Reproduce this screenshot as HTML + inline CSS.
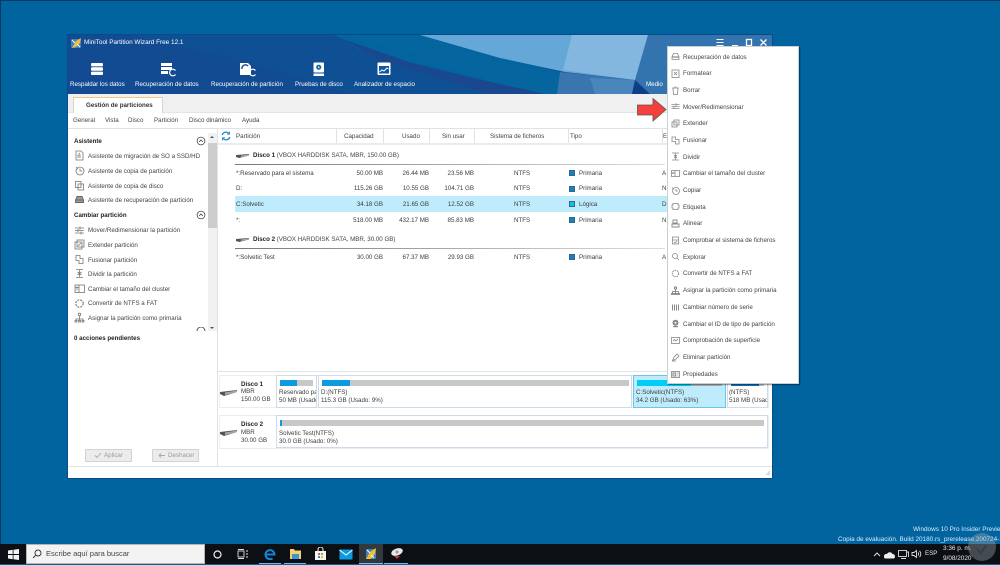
<!DOCTYPE html>
<html lang="es"><head><meta charset="utf-8"><title>MiniTool Partition Wizard</title>
<style>
html,body{margin:0;padding:0}
html{background:#02649f}
body{width:1000px;height:564px;overflow:hidden;position:relative;background:#02649f;font-family:"Liberation Sans",sans-serif;font-size:6.2px;color:#3c3c3c;filter:blur(.3px)}
div,span,svg{position:absolute;white-space:nowrap}
.t{line-height:12px;height:12px}
.h{color:#fff;font-size:6.2px;line-height:12px;top:79px}
.m{top:115px;color:#444}
.s{left:88px;color:#444}
.b{left:74px;font-weight:bold;color:#222}
.i{left:74px;width:11px;height:11px}
.c{top:131px;color:#444}
.sep{top:129px;width:1px;height:14px;background:#dde3e6}
.r{text-align:right}
.sq{width:6px;height:6px;background:#0f82c4;border:1px solid #37658a;box-sizing:border-box;left:569px}
.mi{left:683px;color:#444}
.mic{left:671px;width:9px;height:9px}
.bar{background:#c8c8c8;height:6px}
.fill{background:#0c9be0;height:6px;left:0;top:0}
</style></head><body>
<div style="left:0;top:0;width:1000px;height:1px;background:#0b3a5c"></div>
<div style="left:0;top:0;width:1px;height:544px;background:#0b3a5c"></div>

<!-- window -->
<div style="left:68px;top:35px;width:704px;height:443px;background:#fff;box-shadow:0 0 0 1px #0a4a8a"></div>
<svg style="left:68px;top:35px" width="704" height="59" viewBox="68 35 704 59">
<rect x="68" y="35" width="704" height="59" fill="#124b92"/>
<polygon points="130,35 420,35 560,94 350,94 240,60" fill="#0f4f94"/>
<polygon points="335,35 420,35 560,72 635,80 650,94 540,94 360,50" fill="#03649f"/>
<polygon points="345,35 420,35 500,62 565,75 560,94 520,94 420,55" fill="#04659f"/>
<polygon points="340,38 420,66 545,94 490,94 380,60" fill="#19488f"/>
<polygon points="420,35 648,35 635,80 565,72 500,58" fill="#65a8d8"/>
<polygon points="572,35 648,35 635,80 563,70" fill="#84b7e0"/>
<polygon points="560,72 635,80 632,94 557,94" fill="#3a75b0"/>
<polygon points="590,78 635,80 632,94 595,94" fill="#4a86bb"/>
<polygon points="635,80 650,82 668,94 632,94" fill="#0c3f86"/>
<polygon points="648,35 772,35 772,94 650,94 635,80" fill="#3474ae"/>
</svg>

<!-- logo -->
<svg style="left:71px;top:37px" width="11" height="12" viewBox="0 0 11 12"><rect x="0" y="2" width="10" height="9" rx="1" fill="#3b82c4"/><path d="M1 11 L5 4 L10 1 L9 6 L5 10Z" fill="#f0c030"/><path d="M1 3l3 3M6 7l3 3" stroke="#fff" stroke-width="1"/></svg>
<div class="t" style="left:84px;top:37px;color:#fff;font-size:6.4px">MiniTool Partition Wizard Free 12.1</div>

<!-- toolbar icons -->
<svg style="left:91px;top:62px" width="13" height="14" viewBox="0 0 13 14" fill="#fff"><rect x="0" y="1" width="12" height="3.4" rx="1"/><rect x="0" y="5.3" width="12" height="3.4" rx="1"/><rect x="0" y="9.6" width="12" height="3.4" rx="1"/></svg>
<svg style="left:161px;top:62px" width="16" height="15" viewBox="0 0 16 15" fill="#fff"><rect x="0" y="1" width="11" height="3"/><rect x="0" y="5" width="11" height="3"/><rect x="0" y="9" width="7" height="3"/><path d="M14.5 8.5A3.3 3.3 0 1 0 14.5 12.5" fill="none" stroke="#fff" stroke-width="1.2"/></svg>
<svg style="left:240px;top:62px" width="17" height="15" viewBox="0 0 17 15"><path d="M0 1h8l3 3v9H0z" fill="#fff"/><path d="M2 7a3.5 3.5 0 0 1 6-3" fill="none" stroke="#124b92" stroke-width="1.4"/><path d="M15.5 8.5A3.3 3.3 0 1 0 15.5 12.5" fill="none" stroke="#fff" stroke-width="1.2"/></svg>
<svg style="left:313px;top:62px" width="12" height="15" viewBox="0 0 12 15"><rect x="0.5" y="0.5" width="10.5" height="10" rx="1" fill="#fff"/><circle cx="5.7" cy="5.2" r="2.6" fill="#0f6aa8"/><circle cx="5.7" cy="5.2" r=".8" fill="#fff"/><rect x="0.5" y="11.5" width="10.5" height="2.5" fill="#fff"/></svg>
<svg style="left:377px;top:62px" width="14" height="14" viewBox="0 0 14 14"><rect x=".5" y=".5" width="13" height="12.5" rx="1" fill="#fff"/><rect x="2" y="4" width="10" height="7.5" fill="#0c5a9c"/><path d="M2.5 10l2.5-2 2 1 3-3 1.5 1" fill="none" stroke="#fff" stroke-width="1"/></svg>

<div class="h" style="left:70px">Respaldar los datos</div>
<div class="h" style="left:135px">Recuperación de datos</div>
<div class="h" style="left:211px">Recuperación de partición</div>
<div class="h" style="left:295px">Pruebas de disco</div>
<div class="h" style="left:354px">Analizador de espacio</div>
<div class="h" style="left:646px">Medio</div>

<!-- window controls -->
<svg style="left:715px;top:38px" width="55" height="10" viewBox="0 0 55 10" fill="none" stroke="#fff" stroke-width="1"><path d="M1.5 1.5h7M1.5 4.5h7M1.5 7.500h7"/><path d="M17 7.500h6"/><rect x="31.500" y="1.500" width="5" height="6" stroke-width="1.300"/><path d="M45.500 1.500l6 6M51.500 1.500l-6 6" stroke-width="1.300"/></svg>

<!-- tab bar -->
<div style="left:68px;top:94px;width:704px;height:18px;background:#f0f0f0"></div>
<div style="left:68px;top:112px;width:704px;height:1px;background:#dbe8e6"></div>
<div style="left:73px;top:97px;width:90px;height:16px;background:#fff;border-top:1px solid #f0c98a;border-right:1px solid #d5d5d5;border-left:1px solid #d5d5d5;box-sizing:border-box"></div>
<div class="t" style="left:86px;top:100px;font-weight:bold;color:#333">Gestión de particiones</div>

<!-- menu -->
<div class="t m" style="left:73px">General</div>
<div class="t m" style="left:105px">Vista</div>
<div class="t m" style="left:128px">Disco</div>
<div class="t m" style="left:154px">Partición</div>
<div class="t m" style="left:189px">Disco dinámico</div>
<div class="t m" style="left:242px">Ayuda</div>
<div style="left:68px;top:128px;width:704px;height:1px;background:#dfe3e3"></div>

<!-- left panel -->
<div style="left:217px;top:128px;width:1px;height:338px;background:#dfe5e5"></div>
<div style="left:208px;top:133px;width:9px;height:198px;background:#f1f1f1"></div>
<div style="left:208px;top:143px;width:9px;height:85px;background:#cdcdcd"></div>
<div style="left:210px;top:136px;width:0;height:0;border:2px solid transparent;border-bottom-color:#555;border-top:0"></div>
<div style="left:210px;top:327px;width:0;height:0;border:2px solid transparent;border-top-color:#555;border-bottom:0"></div>

<div class="t b" style="top:136px">Asistente</div>
<div class="t b" style="top:210px">Cambiar partición</div>
<svg style="left:196px;top:136px" width="10" height="10" viewBox="0 0 10 10" fill="none" stroke="#444" stroke-width=".8"><circle cx="5" cy="5" r="3.900"/><path d="M3.200 5.800L5 4l1.800 1.800"/></svg>
<svg style="left:196px;top:210px" width="10" height="10" viewBox="0 0 10 10" fill="none" stroke="#444" stroke-width=".8"><circle cx="5" cy="5" r="3.900"/><path d="M3.200 5.800L5 4l1.800 1.800"/></svg>

<div class="t s" style="top:151px">Asistente de migración de SO a SSD/HD</div>
<div class="t s" style="top:166px">Asistente de copia de partición</div>
<div class="t s" style="top:181px">Asistente de copia de disco</div>
<div class="t s" style="top:195px">Asistente de recuperación de partición</div>
<div class="t s" style="top:225px">Mover/Redimensionar la partición</div>
<div class="t s" style="top:240px">Extender partición</div>
<div class="t s" style="top:255px">Fusionar partición</div>
<div class="t s" style="top:269px">Dividir la partición</div>
<div class="t s" style="top:284px">Cambiar el tamaño del cluster</div>
<div class="t s" style="top:298px">Convertir de NTFS a FAT</div>
<div class="t s" style="top:313px">Asignar la partición como primaria</div>

<svg class="i" style="top:150px" viewBox="0 0 11 11" fill="none" stroke="#777" stroke-width=".8"><path d="M2 1h5l2 2v7H2z"/><path d="M4 8V5h2v3M5 3l1 1"/></svg>
<svg class="i" style="top:165px" viewBox="0 0 11 11" fill="none" stroke="#777" stroke-width=".8"><circle cx="6" cy="6" r="4"/><path d="M6 3.500V6h2.500M2 2l2 2"/></svg>
<svg class="i" style="top:180px" viewBox="0 0 11 11" fill="none" stroke="#777" stroke-width=".8"><rect x="1.500" y="1.500" width="5.500" height="6"/><rect x="4" y="4" width="5.500" height="6"/></svg>
<svg class="i" style="top:194px" viewBox="0 0 11 11" fill="none" stroke="#666" stroke-width=".9"><path d="M1.500 6L3 2.500h5L9.500 6v2.500h-8z" fill="#999"/><path d="M1.500 6h8"/></svg>
<svg class="i" style="top:225px" viewBox="0 0 11 11" fill="none" stroke="#777" stroke-width=".8"><path d="M1 3h9M1 5.500h9M1 8h9M6 1.500v3M4 4v3M7 6.500v3"/></svg>
<svg class="i" style="top:239px" viewBox="0 0 11 11" fill="none" stroke="#777" stroke-width=".8"><rect x="1" y="3" width="7" height="7"/><rect x="3" y="1" width="7" height="7"/><path d="M4 7l3-3"/></svg>
<svg class="i" style="top:254px" viewBox="0 0 11 11" fill="none" stroke="#777" stroke-width=".8"><path d="M2 1.500h4v3h3v5H5V6.500H2z"/></svg>
<svg class="i" style="top:268px" viewBox="0 0 11 11" fill="none" stroke="#777" stroke-width=".8"><path d="M2 1.500h7M2 9.500h7M5.500 2v7M3.500 4l2 1.500 2-1.500M3.500 7l2-1.500 2 1.500"/></svg>
<svg class="i" style="top:283px" viewBox="0 0 11 11" fill="none" stroke="#777" stroke-width=".8"><rect x="1" y="2" width="9.500" height="7.500"/><path d="M1 4.500h4M3 3.500v4M5 2v7.500"/></svg>
<svg class="i" style="top:298px" viewBox="0 0 11 11" fill="none" stroke="#666" stroke-width="1" stroke-dasharray="2 1"><circle cx="5.500" cy="5.500" r="3.700"/></svg>
<svg class="i" style="top:312px" viewBox="0 0 11 11" fill="none" stroke="#777" stroke-width=".8"><circle cx="5.500" cy="2.500" r="1.300"/><path d="M5.500 4v2M2 9V7h7v2M5.500 6v3"/><rect x="1" y="8.500" width="2" height="1.500"/><rect x="4.500" y="8.500" width="2" height="1.500"/><rect x="8" y="8.500" width="2" height="1.500"/></svg>

<div style="left:74px;top:329px;width:130px;height:2px;overflow:hidden"><div class="t b" style="left:0;top:-7px">Partición de disco</div></div>
<svg style="left:196px;top:327px" width="10" height="4" viewBox="0 0 10 4" fill="none" stroke="#444" stroke-width=".8"><path d="M1 4a4 4 0 0 1 8 0"/></svg>
<div class="t b" style="top:333px">0 acciones pendientes</div>

<div style="left:85px;top:449px;width:47px;height:13px;background:#ececec;border:1px solid #d2d2d2;box-sizing:border-box;border-radius:1px"></div>
<div class="t" style="left:104px;top:450px;color:#999">Aplicar</div>
<svg style="left:94px;top:452px" width="8" height="7" viewBox="0 0 8 7" fill="none" stroke="#aaa" stroke-width=".9"><path d="M1 3.500l2 2 4-4.500"/></svg>
<div style="left:152px;top:449px;width:47px;height:13px;background:#ececec;border:1px solid #d2d2d2;box-sizing:border-box;border-radius:1px"></div>
<div class="t" style="left:168px;top:450px;color:#999">Deshacer</div>
<svg style="left:158px;top:452px" width="8" height="7" viewBox="0 0 8 7" fill="none" stroke="#aaa" stroke-width=".9"><path d="M1 3.500h6M3 1.500l-2 2 2 2"/></svg>

<div style="left:68px;top:466px;width:704px;height:1px;background:#dfe5e5"></div>
<svg style="left:765px;top:470px" width="6" height="6" viewBox="0 0 6 6" stroke="#bbb" stroke-width=".8"><path d="M5 1L1 5M5 3L3 5"/></svg>

<!-- table -->
<svg style="left:221px;top:131px" width="10" height="10" viewBox="0 0 10 10" fill="none" stroke="#1b87d6" stroke-width="1.300"><path d="M1.200 4A4 4 0 0 1 8 2.500M8.800 6A4 4 0 0 1 2 7.500"/><path d="M8.500 .6v2.600H6M1.500 9.400V6.800H4" stroke-width=".9"/></svg>
<div class="t c" style="left:236px">Partición</div>
<div class="t c" style="left:344px">Capacidad</div>
<div class="t c" style="left:402px">Usado</div>
<div class="t c" style="left:442px">Sin usar</div>
<div class="t c" style="left:490px">Sistema de ficheros</div>
<div class="t c" style="left:570px">Tipo</div>
<div class="t c" style="left:663px">E</div>
<div class="sep" style="left:336px"></div><div class="sep" style="left:383px"></div><div class="sep" style="left:429px"></div><div class="sep" style="left:474px"></div><div class="sep" style="left:568px"></div><div class="sep" style="left:662px"></div>
<div style="left:218px;top:143px;width:554px;height:2px;background:#e7ecee"></div>

<svg style="left:236px;top:153px" width="14" height="6" viewBox="0 0 14 6"><path d="M0 2l13-1v1.500L3 5 0 4z" fill="#555"/><path d="M5 2.500L13 1.500v1L5 4z" fill="#aaa"/></svg>
<div class="t" style="left:253px;top:150px;color:#444"><b style="color:#222">Disco 1</b> (VBOX HARDDISK SATA, MBR, 150.00 GB)</div>
<div style="left:235px;top:164px;width:430px;height:1px;background:linear-gradient(90deg,#777,#ddd)"></div>

<svg style="left:236px;top:237px" width="14" height="6" viewBox="0 0 14 6"><path d="M0 2l13-1v1.500L3 5 0 4z" fill="#555"/><path d="M5 2.500L13 1.500v1L5 4z" fill="#aaa"/></svg>
<div class="t" style="left:253px;top:234px;color:#444"><b style="color:#222">Disco 2</b> (VBOX HARDDISK SATA, MBR, 30.00 GB)</div>
<div style="left:235px;top:248px;width:430px;height:1px;background:linear-gradient(90deg,#777,#ddd)"></div>

<div style="left:235px;top:196px;width:432px;height:16px;background:#bfecfd"></div>

<div class="t" style="left:236px;top:168px">*:Reservado para el sistema</div>
<div class="t r" style="left:340px;top:168px;width:43px">50.00 MB</div>
<div class="t r" style="left:386px;top:168px;width:43px">26.44 MB</div>
<div class="t r" style="left:431px;top:168px;width:43px">23.56 MB</div>
<div class="t" style="left:514px;top:168px">NTFS</div>
<div class="sq" style="top:170px"></div><div class="t" style="left:579px;top:168px">Primaria</div>
<div class="t" style="left:662px;top:168px">A</div>

<div class="t" style="left:236px;top:183px">D:</div>
<div class="t r" style="left:340px;top:183px;width:43px">115.26 GB</div>
<div class="t r" style="left:386px;top:183px;width:43px">10.55 GB</div>
<div class="t r" style="left:431px;top:183px;width:43px">104.71 GB</div>
<div class="t" style="left:514px;top:183px">NTFS</div>
<div class="sq" style="top:186px"></div><div class="t" style="left:579px;top:183px">Primaria</div>
<div class="t" style="left:662px;top:183px">N</div>

<div class="t" style="left:236px;top:199px">C:Solvetic</div>
<div class="t r" style="left:340px;top:199px;width:43px">34.18 GB</div>
<div class="t r" style="left:386px;top:199px;width:43px">21.65 GB</div>
<div class="t r" style="left:431px;top:199px;width:43px">12.52 GB</div>
<div class="t" style="left:514px;top:199px">NTFS</div>
<div class="sq" style="top:201px;background:#14bdf0"></div><div class="t" style="left:579px;top:199px">Lógica</div>
<div class="t" style="left:662px;top:199px">D</div>

<div class="t" style="left:236px;top:215px">*:</div>
<div class="t r" style="left:340px;top:215px;width:43px">518.00 MB</div>
<div class="t r" style="left:386px;top:215px;width:43px">432.17 MB</div>
<div class="t r" style="left:431px;top:215px;width:43px">85.83 MB</div>
<div class="t" style="left:514px;top:215px">NTFS</div>
<div class="sq" style="top:217px"></div><div class="t" style="left:579px;top:215px">Primaria</div>
<div class="t" style="left:662px;top:215px">N</div>

<div class="t" style="left:236px;top:252px">*:Solvetic Test</div>
<div class="t r" style="left:340px;top:252px;width:43px">30.00 GB</div>
<div class="t r" style="left:386px;top:252px;width:43px">67.37 MB</div>
<div class="t r" style="left:431px;top:252px;width:43px">29.93 GB</div>
<div class="t" style="left:514px;top:252px">NTFS</div>
<div class="sq" style="top:254px"></div><div class="t" style="left:579px;top:252px">Primaria</div>
<div class="t" style="left:662px;top:252px">A</div>

<!-- disk map -->
<div style="left:218px;top:371px;width:554px;height:1px;background:#dfe5e5"></div>
<div style="left:219px;top:375px;width:550px;height:33px;background:#fff;border:1px solid #eaeef2;box-sizing:border-box"></div>
<div style="left:219px;top:415px;width:550px;height:34px;background:#fff;border:1px solid #eaeef2;box-sizing:border-box"></div>

<svg style="left:220px;top:389px" width="18" height="9" viewBox="0 0 18 9"><path d="M0 3l17-2v2L4 7 0 5z" fill="#555"/><path d="M5 3.500l12-2v1.500L5 6z" fill="#aaa"/></svg>
<svg style="left:220px;top:429px" width="18" height="9" viewBox="0 0 18 9"><path d="M0 3l17-2v2L4 7 0 5z" fill="#555"/><path d="M5 3.500l12-2v1.500L5 6z" fill="#aaa"/></svg>
<div class="t" style="left:241px;top:379px;font-weight:bold;color:#222">Disco 1</div>
<div class="t" style="left:241px;top:386px">MBR</div>
<div class="t" style="left:241px;top:394px">150.00 GB</div>
<div class="t" style="left:241px;top:419px;font-weight:bold;color:#222">Disco 2</div>
<div class="t" style="left:241px;top:427px">MBR</div>
<div class="t" style="left:241px;top:435px">30.00 GB</div>

<div style="left:276px;top:375px;width:41px;height:33px;background:#fff;border:1px solid #cfdbe6;box-sizing:border-box"></div>
<div class="bar" style="left:280px;top:380px;width:33px"><div class="fill" style="width:17px"></div></div>
<div style="left:279px;top:387px;width:37px;height:20px;overflow:hidden"><div class="t" style="left:0;top:0">Reservado para</div><div class="t" style="left:0;top:8px">50 MB (Usado: 52%)</div></div>

<div style="left:318px;top:375px;width:314px;height:33px;background:#fff;border:1px solid #cfdbe6;box-sizing:border-box"></div>
<div class="bar" style="left:322px;top:380px;width:307px"><div class="fill" style="width:28px"></div></div>
<div class="t" style="left:321px;top:387px">D:(NTFS)</div>
<div class="t" style="left:321px;top:395px">115.3 GB (Usado: 9%)</div>

<div style="left:633px;top:375px;width:93px;height:33px;background:#bfecfd;border:1px solid #6fc3e8;box-sizing:border-box"></div>
<div class="bar" style="left:637px;top:380px;width:85px;background:#a9b7bd"><div class="fill" style="width:54px;background:#00cdf5"></div></div>
<div class="t" style="left:636px;top:387px">C:Solvetic(NTFS)</div>
<div class="t" style="left:636px;top:395px">34.2 GB (Usado: 63%)</div>

<div style="left:727px;top:375px;width:41px;height:33px;background:#fff;border:1px solid #cfdbe6;box-sizing:border-box"></div>
<div class="bar" style="left:731px;top:380px;width:33px"><div class="fill" style="width:28px;background:#0f70c0"></div></div>
<div style="left:729px;top:387px;width:38px;height:20px;overflow:hidden"><div class="t" style="left:0;top:0">(NTFS)</div><div class="t" style="left:0;top:8px">518 MB (Usado: 83%)</div></div>

<div style="left:276px;top:415px;width:492px;height:33px;background:#fff;border:1px solid #cfdbe6;box-sizing:border-box"></div>
<div class="bar" style="left:280px;top:420px;width:484px"><div class="fill" style="width:2px"></div></div>
<div class="t" style="left:279px;top:428px">Solvetic Test(NTFS)</div>
<div class="t" style="left:279px;top:436px">30.0 GB (Usado: 0%)</div>

<!-- red arrow -->
<svg style="left:636px;top:97px" width="32" height="26" viewBox="0 0 32 26"><polygon points="1.500,8 17,8 17,1.500 30,12.500 17,24 17,18 1.500,18" fill="#f6403c" stroke="#555" stroke-width=".8"/></svg>

<!-- context menu -->
<div style="left:667px;top:46px;width:132px;height:338px;background:#fff;border:1px solid #c8d0d6;box-sizing:border-box;box-shadow:1px 1px 1px rgba(0,0,0,.45)"></div>
<div class="t mi" style="top:52px">Recuperación de datos</div>
<div class="t mi" style="top:68px">Formatear</div>
<div class="t mi" style="top:85px">Borrar</div>
<div class="t mi" style="top:102px">Mover/Redimensionar</div>
<div class="t mi" style="top:118px">Extender</div>
<div class="t mi" style="top:135px">Fusionar</div>
<div class="t mi" style="top:152px">Dividir</div>
<div class="t mi" style="top:168px">Cambiar el tamaño del cluster</div>
<div class="t mi" style="top:185px">Copiar</div>
<div class="t mi" style="top:202px">Etiqueta</div>
<div class="t mi" style="top:218px">Alinear</div>
<div class="t mi" style="top:235px">Comprobar el sistema de ficheros</div>
<div class="t mi" style="top:252px">Explorar</div>
<div class="t mi" style="top:268px">Convertir de NTFS a FAT</div>
<div class="t mi" style="top:285px">Asignar la partición como primaria</div>
<div class="t mi" style="top:302px">Cambiar número de serie</div>
<div class="t mi" style="top:319px">Cambiar el ID de tipo de partición</div>
<div class="t mi" style="top:335px">Comprobación de superficie</div>
<div class="t mi" style="top:352px">Eliminar partición</div>
<div class="t mi" style="top:369px">Propiedades</div>

<svg class="mic" style="top:52px" viewBox="0 0 9 9" fill="none" stroke="#888" stroke-width=".8"><path d="M1 5l1.500-3.500h4L8 5v2.500H1z"/><path d="M1 5h7" stroke-width="1.200"/></svg>
<svg class="mic" style="top:69px" viewBox="0 0 9 9" fill="none" stroke="#888" stroke-width=".8"><rect x="1" y="1" width="7" height="7.500"/><path d="M3 3l3 3M6 3L3 6"/></svg>
<svg class="mic" style="top:86px" viewBox="0 0 9 9" fill="none" stroke="#888" stroke-width=".8"><path d="M1 2h7M2 2l.5 6.500h4L7 2M3.500 1h2"/></svg>
<svg class="mic" style="top:102px" viewBox="0 0 9 9" fill="none" stroke="#888" stroke-width=".7"><path d="M.5 2.500h8M.5 4.500h8M.5 6.500h8M5 1v3M3 4v3"/></svg>
<svg class="mic" style="top:119px" viewBox="0 0 9 9" fill="none" stroke="#888" stroke-width=".8"><rect x="1" y="3" width="5" height="5"/><rect x="3" y="1" width="5" height="5"/></svg>
<svg class="mic" style="top:136px" viewBox="0 0 9 9" fill="none" stroke="#888" stroke-width=".8"><path d="M1 1h3.500v2.500H8V8H4.500V5.500H1z"/></svg>
<svg class="mic" style="top:152px" viewBox="0 0 9 9" fill="none" stroke="#888" stroke-width=".8"><path d="M1 1h7M1 8h7M4.500 1v7M3 3l1.500 1.500L6 3M3 6l1.500-1.500L6 6"/></svg>
<svg class="mic" style="top:169px" viewBox="0 0 9 9" fill="none" stroke="#888" stroke-width=".8"><rect x=".5" y="1.500" width="8" height="6"/><path d="M.5 4h3.500M4 1.500v6M2 3v2"/></svg>
<svg class="mic" style="top:186px" viewBox="0 0 9 9" fill="none" stroke="#888" stroke-width=".8"><circle cx="5" cy="5" r="3.500"/><path d="M5 3v2h2M1 1.500l2 2"/></svg>
<svg class="mic" style="top:202px" viewBox="0 0 9 9" fill="none" stroke="#888" stroke-width=".8"><path d="M1 3h1V1.500h5V3h1v3H7v1.500H2V6H1z"/></svg>
<svg class="mic" style="top:219px" viewBox="0 0 9 9" fill="none" stroke="#888" stroke-width=".9"><path d="M2 1h4v3H2zM1 5h7v3H1z"/></svg>
<svg class="mic" style="top:236px" viewBox="0 0 9 9" fill="none" stroke="#888" stroke-width=".8"><path d="M1.500 1h6v7h-6zM1.500 4h6M3 6l1 1 2-2"/></svg>
<svg class="mic" style="top:252px" viewBox="0 0 9 9" fill="none" stroke="#888" stroke-width=".8"><circle cx="4" cy="4" r="2.500"/><path d="M6 6l2 2"/></svg>
<svg class="mic" style="top:269px" viewBox="0 0 9 9" fill="none" stroke="#777" stroke-width=".9" stroke-dasharray="1.500 .8"><circle cx="4.500" cy="4.500" r="3.200"/></svg>
<svg class="mic" style="top:286px" viewBox="0 0 9 9" fill="none" stroke="#777" stroke-width=".8"><circle cx="4.500" cy="2" r="1.200"/><path d="M4.500 3.500V8M1.500 8V5.500h6V8"/><path d="M.5 7.500h2v1h-2zM3.500 7.500h2v1h-2zM6.500 7.500h2v1h-2z"/></svg>
<svg class="mic" style="top:303px" viewBox="0 0 9 9" fill="none" stroke="#888" stroke-width="1"><path d="M1.500 1.500v6M3.500 1.500v6M5.500 1.500v6M7.500 1.500v6"/></svg>
<svg class="mic" style="top:319px" viewBox="0 0 9 9"><circle cx="4.500" cy="3.700" r="3" fill="#888"/><circle cx="4.500" cy="3.700" r="1" fill="#fff"/><rect x="2" y="7" width="5" height="1.200" fill="#888"/></svg>
<svg class="mic" style="top:336px" viewBox="0 0 9 9" fill="none" stroke="#888" stroke-width=".8"><rect x=".5" y="1.500" width="8" height="6"/><path d="M2 5l1.500-1.500L5 5l2-2"/></svg>
<svg class="mic" style="top:353px" viewBox="0 0 9 9" fill="none" stroke="#888" stroke-width=".8"><path d="M1.500 7.500L3 4l3-3 2 2-3 3z"/><path d="M1 8h4"/></svg>
<svg class="mic" style="top:370px" viewBox="0 0 9 9" fill="none" stroke="#888" stroke-width=".8"><rect x=".5" y="1.500" width="8" height="6" fill="#e4e4e4"/><rect x="2" y="3" width="2.500" height="3"/></svg>

<!-- watermark text -->
<div class="t" style="left:913px;top:524px;color:#d6ecff;font-size:6.4px">Windows 10 Pro Insider Preview</div>
<div class="t" style="left:838px;top:534px;color:#d6ecff;font-size:6.4px">Copia de evaluación. Build 20180.rs_prerelease.200724-1714</div>

<!-- taskbar -->
<div style="left:0;top:544px;width:1000px;height:20px;background:#0c1014"></div>
<svg style="left:8px;top:549px" width="11" height="11" viewBox="0 0 11 11" fill="#f2f2f2"><path d="M0 1.500L4.700.8v4.200H0zM5.500.7L11 0v5H5.500zM0 6h4.700v4.200L0 9.500zM5.500 6H11v5l-5.500-.7z"/></svg>
<div style="left:26px;top:544px;width:179px;height:20px;background:#f3f3f3;box-sizing:border-box;border:1px solid #b5b5b5"></div>
<svg style="left:32px;top:549px" width="10" height="10" viewBox="0 0 10 10" fill="none" stroke="#333" stroke-width=".9"><circle cx="6" cy="4" r="3"/><path d="M3.800 6.200L1 9"/></svg>
<div class="t" style="left:46px;top:548px;color:#444;font-size:7.5px">Escribe aquí para buscar</div>
<svg style="left:212px;top:549px" width="11" height="11" viewBox="0 0 11 11" fill="none" stroke="#eee" stroke-width="1.200"><circle cx="5.500" cy="5.500" r="3.500"/></svg>
<svg style="left:237px;top:549px" width="12" height="10" viewBox="0 0 12 10" fill="none" stroke="#ddd" stroke-width=".9"><rect x="1" y="2" width="6" height="6"/><path d="M1 .5h6M1 9.500h6M9 2h2M9 5h2M9 8h2"/></svg>
<svg style="left:264px;top:548px" width="12" height="12" viewBox="0 0 12 12" fill="none" stroke="#0e86d9" stroke-width="2"><path d="M2 6.500h8.500A4.500 4.500 0 1 0 8.500 10.400"/></svg>
<svg style="left:289px;top:548px" width="13" height="12" viewBox="0 0 13 12"><path d="M1 1h4l1 1.500h6V11H1z" fill="#f5cf6d"/><rect x="3" y="6" width="7" height="5" fill="#3b95d8"/></svg>
<svg style="left:314px;top:547px" width="13" height="14" viewBox="0 0 13 14"><path d="M1 4h11v9H1z" fill="#f5f5f5"/><path d="M4 4V2.500a2.500 2.500 0 0 1 5 0V4" fill="none" stroke="#f5f5f5"/><rect x="4" y="6" width="2" height="2" fill="#e85a2c"/><rect x="7" y="6" width="2" height="2" fill="#7cb53f"/><rect x="4" y="9" width="2" height="2" fill="#2a8ad4"/><rect x="7" y="9" width="2" height="2" fill="#f5b72c"/></svg>
<svg style="left:339px;top:549px" width="14" height="11" viewBox="0 0 14 11"><rect x="0.500" y="0.500" width="13" height="10" fill="#0e9ae0"/><path d="M.5 1L7 6l6.500-5" fill="none" stroke="#fff" stroke-width="1"/></svg>
<div style="left:359px;top:544px;width:24px;height:20px;background:#33383c"></div>
<svg style="left:365px;top:547px" width="12" height="14" viewBox="0 0 12 14"><rect x="1" y="2" width="10" height="10" rx="1" fill="#3b82c4"/><path d="M1 12L5 5l6-4-1 6-4 5z" fill="#f0c030"/><path d="M2 3l3 3M6 8l3 3" stroke="#fff"/></svg>
<svg style="left:390px;top:547px" width="14" height="13" viewBox="0 0 14 13"><ellipse cx="7" cy="5" rx="6" ry="3.500" fill="#e8e8e8" transform="rotate(-20 7 5)"/><path d="M4 9l3 3 3-3" fill="#c33"/><circle cx="7" cy="5" r="1.500" fill="#999"/></svg>
<div style="left:359px;top:563px;width:24px;height:1px;background:#76b9ed"></div>
<div style="left:259px;top:563px;width:22px;height:1px;background:#76b9ed"></div>
<div style="left:284px;top:563px;width:22px;height:1px;background:#76b9ed"></div>
<div style="left:384px;top:563px;width:24px;height:1px;background:#76b9ed"></div>

<svg style="left:872px;top:550px" width="10" height="8" viewBox="0 0 10 8" fill="none" stroke="#ddd"><path d="M2 6l3-3 3 3"/></svg>
<svg style="left:884px;top:551px" width="11" height="8" viewBox="0 0 11 8" fill="#eee"><path d="M1 7.500A2.500 2.500 0 0 1 3 3a3 3 0 0 1 5.500 0A2.500 2.500 0 0 1 10 7.500z"/></svg>
<svg style="left:897px;top:549px" width="12" height="11" viewBox="0 0 12 11" fill="none" stroke="#ddd" stroke-width=".9"><rect x="1.500" y="1.500" width="8" height="6"/><path d="M4 9.500h5M10 3h1.500v5"/></svg>
<svg style="left:911px;top:549px" width="11" height="10" viewBox="0 0 11 10" fill="none" stroke="#ddd" stroke-width=".9"><path d="M1 3.500h2l2.500-2v7L3 6.500H1zM7 3.500a2 2 0 0 1 0 3M8.500 2a4 4 0 0 1 0 6"/></svg>
<div class="t" style="left:925px;top:548px;color:#e8e8e8;font-size:6.2px">ESP</div>
<div class="t" style="left:943px;top:543px;color:#e8e8e8;font-size:6.4px">3:36 p. m.</div>
<div class="t" style="left:943px;top:553px;color:#e8e8e8;font-size:6.4px">9/08/2020</div>
<svg style="left:967px;top:527px" width="30" height="37" viewBox="0 0 30 37"><circle cx="15" cy="20" r="14" fill="#9ba4ab" opacity=".4"/><path d="M10 22l4 4 5-8" fill="none" stroke="#234" stroke-width="2" opacity=".5"/></svg>
</body></html>
